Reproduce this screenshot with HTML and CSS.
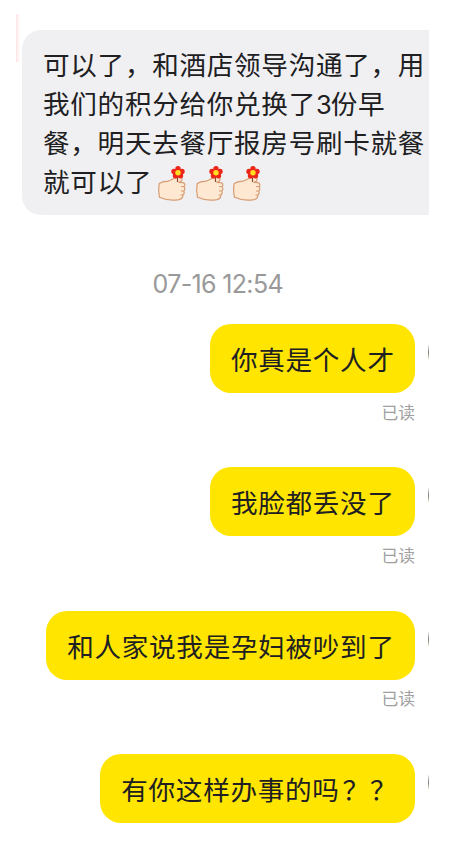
FILE: index.html
```html
<!DOCTYPE html>
<html lang="zh-CN">
<head>
<meta charset="utf-8">
<title>聊天</title>
<link rel="stylesheet" href="styles.css">
</head>
<body>
<svg class="defs" width="0" height="0" aria-hidden="true">
  <symbol id="flower-hand" viewBox="0 0 30 38">
    <path d="M2.2 17.5C5 15.7 8 15.4 11 15.2C14 14.7 16.6 12 20 11.3C23 10.5 25.8 11.7 24.9 14.2C24.4 15.6 22.8 16 21.5 16.3L26 16.6C28.2 17 28.4 19.5 27 20.7C28.2 22 28 24 26.7 25C27.6 26.4 27.2 28.3 25.8 29C26.2 31.5 24.5 33 22 33.6C15 34.8 8 33.8 2.5 31.3C1.5 27 1.4 21.5 2.2 17.5Z" fill="#ffe8d2" stroke="#d69b72" stroke-width="1.2"/>
    <path d="M24 20.6H27M24 25H26.7M23.5 29H25.8" fill="none" stroke="#d69b72" stroke-width="1"/>
    <path d="M20.5 9V16" stroke="#8c4930" stroke-width="1.2"/>
    <g fill="#ed2418">
      <circle cx="21" cy="2.8" r="2.7"/><circle cx="25" cy="5.5" r="2.7"/><circle cx="23.5" cy="9.8" r="2.7"/><circle cx="18.5" cy="9.8" r="2.7"/><circle cx="17" cy="5.5" r="2.7"/>
    </g>
    <circle cx="21" cy="6.8" r="2.7" fill="#ffdf20"/>
  </symbol>
</svg>
<main class="screen">
  <div class="bubble received">
    <p>可以了，和酒店领导沟通了，用</p>
    <p>我们的积分给你兑换了<span class="digit">3</span>份早</p>
    <p>餐，明天去餐厅报房号刷卡就餐</p>
    <p class="with-icons">就可以了<span class="icons"><svg><use href="#flower-hand"/></svg><svg><use href="#flower-hand"/></svg><svg><use href="#flower-hand"/></svg></span></p>
  </div>
  <time class="time">07-16 12:54</time>
  <section class="message">
    <div class="row"><div class="bubble sent">你真是个人才</div><span class="avatar"></span></div>
    <div class="status">已读</div>
  </section>
  <section class="message">
    <div class="row"><div class="bubble sent">我脸都丢没了</div><span class="avatar"></span></div>
    <div class="status">已读</div>
  </section>
  <section class="message">
    <div class="row"><div class="bubble sent">和人家说我是孕妇被吵到了</div><span class="avatar"></span></div>
    <div class="status">已读</div>
  </section>
  <section class="message">
    <div class="row"><div class="bubble sent question">有你这样办事的吗<span class="mark">？？</span></div><span class="avatar"></span></div>
  </section>
</main>
</body>
</html>
```
FILE: styles.css
```css
* { box-sizing: border-box; }
body {
  margin: 0;
  background: #fff;
  font-family: "Noto Sans CJK SC", sans-serif;
  color: #202022;
}
.defs { display: block; }
.screen {
  width: 413px;
  height: 827px;
  margin: 14px 0 0 16px;
  padding: 15.5px 0 0 6px;
  overflow: hidden;
  background: linear-gradient(90deg, #ffe3e3, #fff) 0 0 / 4px 48px no-repeat;
}
.bubble { font-size: 26.6px; letter-spacing: .7px; white-space: nowrap; }
.received {
  height: 185.5px;
  padding: 14px 0 0 21px;
  border-radius: 19px 0 0 19px;
  background: #f0f0f2;
}
.received p { margin: 0; height: 39.2px; line-height: 39.2px; }
.mark { padding-left: 3px; }
.digit { font-family: Inter, sans-serif; font-size: 25.5px; letter-spacing: -1px; }
.with-icons { display: flex; }
.icons { display: flex; gap: 7.5px; padding: 5px 0 0 5px; }
.icons svg { width: 30px; height: 38px; }
.time {
  display: block;
  height: 36px;
  margin: 50.5px 0 22.5px 130.5px;
  line-height: 36px;
  font-family: Inter, sans-serif;
  font-size: 25px;
  letter-spacing: -.65px;
  color: #999;
}
.message { height: 143.3px; }
.row { display: flex; justify-content: flex-end; align-items: flex-start; }
.sent {
  height: 69px;
  padding: 0 20.3px 0 21px;
  border-radius: 21px;
  line-height: 69px;
  background: #ffe500;
}
.question { padding-right: 17.8px; }
.avatar {
  flex: none;
  width: 1px;
  height: 14px;
  margin: 21px 0 0 13px;
  background: linear-gradient(#eee, #888 45%, #888 60%, #eee8cc);
}
.status {
  height: 26px;
  margin: 5.5px 14px 0 0;
  line-height: 26px;
  text-align: right;
  font-size: 16.8px;
  color: #a0a0a0;
}
```
